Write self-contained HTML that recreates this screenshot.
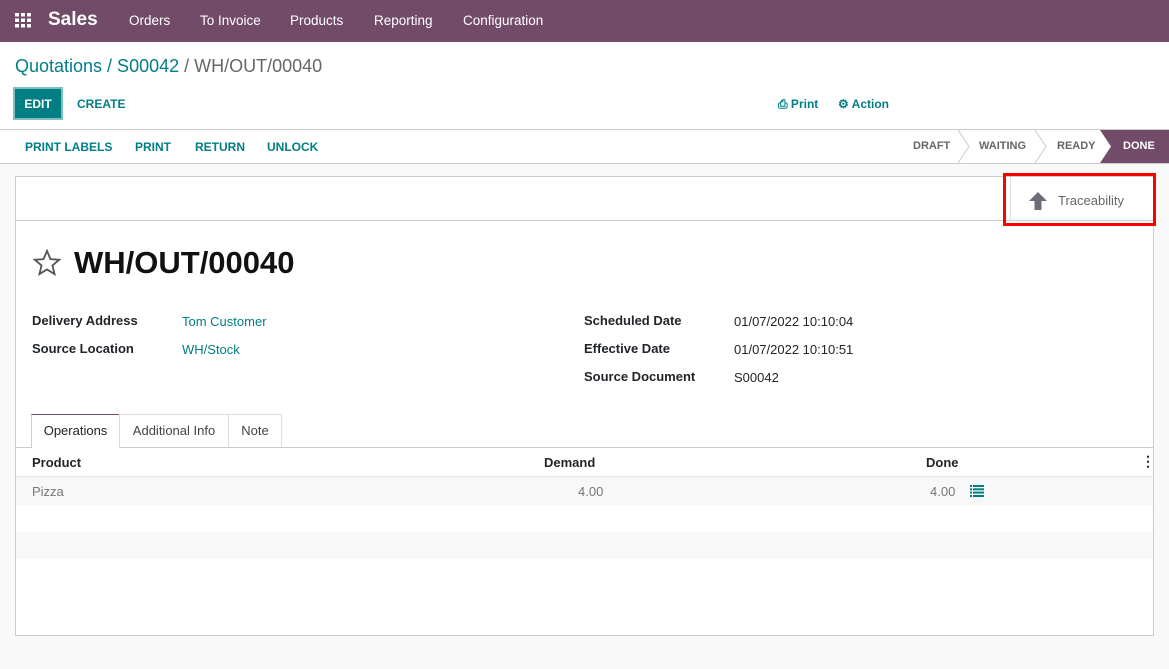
<!DOCTYPE html>
<html><head><meta charset="utf-8"><style>
*{box-sizing:border-box;margin:0;padding:0}
body{width:1169px;height:669px;overflow:hidden;background:#f9f9fa;font-family:"Liberation Sans",sans-serif;font-size:13px;color:#212529;position:relative}
.abs{position:absolute;white-space:nowrap}
.nav{position:absolute;left:0;top:0;width:1169px;height:42px;background:#714b67;color:#fff}
.cp{position:absolute;left:0;top:42px;width:1169px;height:88px;background:#fff;border-bottom:1px solid #ccc}
.sb{position:absolute;left:0;top:130px;width:1169px;height:34px;background:#fff;border-bottom:1px solid #ccc}
.teal{color:#017e84}
.b{font-weight:bold}
.sheet{position:absolute;left:15px;top:176px;width:1139px;height:460px;background:#fff;border:1px solid #ccc}
.lbl{font-weight:bold;color:#212529}
</style></head><body>
<div class="nav">
<svg class="abs" style="left:15px;top:13px" width="16" height="15" viewBox="0 0 16 15" fill="#fff"><rect x="0" y="0" width="4" height="3.5"/><rect x="6" y="0" width="4" height="3.5"/><rect x="12" y="0" width="4" height="3.5"/><rect x="0" y="5.5" width="4" height="3.5"/><rect x="6" y="5.5" width="4" height="3.5"/><rect x="12" y="5.5" width="4" height="3.5"/><rect x="0" y="11" width="4" height="3.5"/><rect x="6" y="11" width="4" height="3.5"/><rect x="12" y="11" width="4" height="3.5"/></svg>
<div class="abs b" style="left:48px;top:9px;font-size:19px">Sales</div>
<div class="abs" style="left:129px;top:13px;font-size:13.5px">Orders</div>
<div class="abs" style="left:200px;top:13px;font-size:13.5px">To Invoice</div>
<div class="abs" style="left:290px;top:13px;font-size:13.5px">Products</div>
<div class="abs" style="left:374px;top:13px;font-size:13.5px">Reporting</div>
<div class="abs" style="left:463px;top:13px;font-size:13.5px">Configuration</div>
</div>
<div class="cp">
<div class="abs" style="left:15px;top:14px;font-size:18px"><span class="teal">Quotations / S00042</span><span style="color:#666"> / WH/OUT/00040</span></div>
<div class="abs b" style="left:13px;top:45px;width:50px;height:33px;background:#017e84;border:2px solid #7fbfc2;color:#fff;font-size:12px;line-height:31px;text-align:center">EDIT</div>
<div class="abs b teal" style="left:77px;top:55px;font-size:12px">CREATE</div>
<div class="abs b teal" style="left:778px;top:55px;font-size:12px">&#9113; Print</div>
<div class="abs b teal" style="left:838px;top:55px;font-size:12px">&#9881; Action</div>
</div>
<div class="sb">
<div class="abs b teal" style="left:25px;top:10px;font-size:12px">PRINT LABELS</div>
<div class="abs b teal" style="left:135px;top:10px;font-size:12px">PRINT</div>
<div class="abs b teal" style="left:195px;top:10px;font-size:12px">RETURN</div>
<div class="abs b teal" style="left:267px;top:10px;font-size:12px">UNLOCK</div>
<div class="abs b" style="left:913px;top:10px;font-size:11px;color:#666">DRAFT</div>
<svg class="abs" style="left:957px;top:0" width="14" height="33"><path d="M1 0 L12 16.5 L1 33" stroke="#ccc" fill="none"/></svg>
<div class="abs b" style="left:979px;top:10px;font-size:11px;color:#666">WAITING</div>
<svg class="abs" style="left:1034px;top:0" width="14" height="33"><path d="M1 0 L12 16.5 L1 33" stroke="#ccc" fill="none"/></svg>
<div class="abs b" style="left:1057px;top:10px;font-size:11px;color:#666">READY</div>
<svg class="abs" style="left:1100px;top:0" width="69" height="33"><path d="M0 0 H69 V33 H0 L11 16.5 Z" fill="#714b67"/></svg>
<div class="abs b" style="left:1123px;top:10px;font-size:11px;color:#fff">DONE</div>
</div>
<div class="sheet">
<div class="abs" style="left:0;top:43px;width:1137px;border-top:1px solid #ccc"></div>
<div class="abs" style="left:994px;top:0;width:1px;height:44px;background:#ddd"></div>
<svg class="abs" style="left:1012px;top:14px" width="20" height="20" viewBox="0 0 20 20"><path d="M10 1 L19 10 L13.5 10 L13.5 19 L6.5 19 L6.5 10 L1 10 Z" fill="#6c6c7a"/></svg>
<div class="abs" style="left:1042px;top:16px;font-size:13px;color:#666">Traceability</div>
<svg class="abs" style="left:16px;top:72px" width="30" height="28" viewBox="0 0 24 23"><path d="M12 1.5 L14.8 8.3 L22 8.8 L16.5 13.5 L18.2 20.6 L12 16.8 L5.8 20.6 L7.5 13.5 L2 8.8 L9.2 8.3 Z" fill="none" stroke="#555" stroke-width="1.5"/></svg>
<div class="abs b" style="left:58px;top:68px;font-size:31px;color:#111">WH/OUT/00040</div>
<div class="abs lbl" style="left:16px;top:136px">Delivery Address</div>
<div class="abs teal" style="left:166px;top:137px">Tom Customer</div>
<div class="abs lbl" style="left:16px;top:164px">Source Location</div>
<div class="abs teal" style="left:166px;top:165px">WH/Stock</div>
<div class="abs lbl" style="left:568px;top:136px">Scheduled Date</div>
<div class="abs" style="left:718px;top:137px">01/07/2022 10:10:04</div>
<div class="abs lbl" style="left:568px;top:164px">Effective Date</div>
<div class="abs" style="left:718px;top:165px">01/07/2022 10:10:51</div>
<div class="abs lbl" style="left:568px;top:192px">Source Document</div>
<div class="abs" style="left:718px;top:193px">S00042</div>
<div class="abs" style="left:0;top:270px;width:1137px;border-top:1px solid #ccc"></div>
<div class="abs" style="left:15px;top:237px;width:89px;height:34px;background:#fff;border:1px solid #ccc;border-top:1px solid #714b67;border-bottom:none;text-align:center;line-height:32px">Operations</div>
<div class="abs" style="left:103px;top:237px;width:110px;height:33px;border:1px solid #ddd;border-bottom:none;text-align:center;line-height:32px;color:#444">Additional Info</div>
<div class="abs" style="left:212px;top:237px;width:54px;height:33px;border:1px solid #ddd;border-bottom:none;text-align:center;line-height:32px;color:#444">Note</div>
<div class="abs lbl" style="left:16px;top:278px">Product</div>
<div class="abs lbl" style="left:528px;top:278px">Demand</div>
<div class="abs lbl" style="left:910px;top:278px">Done</div>
<div class="abs b" style="left:1125px;top:276px;font-size:14px">&#8942;</div>
<div class="abs" style="left:0;top:299px;width:1137px;height:29px;background:#f8f8f8;border-top:1px solid #e6e6e6"></div>
<div class="abs" style="left:16px;top:307px;color:#777">Pizza</div>
<div class="abs" style="left:562px;top:307px;color:#777">4.00</div>
<div class="abs" style="left:914px;top:307px;color:#777">4.00</div>
<svg class="abs" style="left:954px;top:308px" width="14" height="12"><g fill="#017e84"><rect x="0" y="0" width="2" height="2"/><rect x="3" y="0" width="11" height="2"/><rect x="0" y="3.3" width="2" height="2"/><rect x="3" y="3.3" width="11" height="2"/><rect x="0" y="6.6" width="2" height="2"/><rect x="3" y="6.6" width="11" height="2"/><rect x="0" y="10" width="2" height="2"/><rect x="3" y="10" width="11" height="2"/></g></svg>
<div class="abs" style="left:0;top:355px;width:1137px;height:27px;background:#f8f8f8"></div>
</div>
<div class="abs" style="left:1003px;top:173px;width:153px;height:53px;border:3px solid #f00"></div>
</body></html>
